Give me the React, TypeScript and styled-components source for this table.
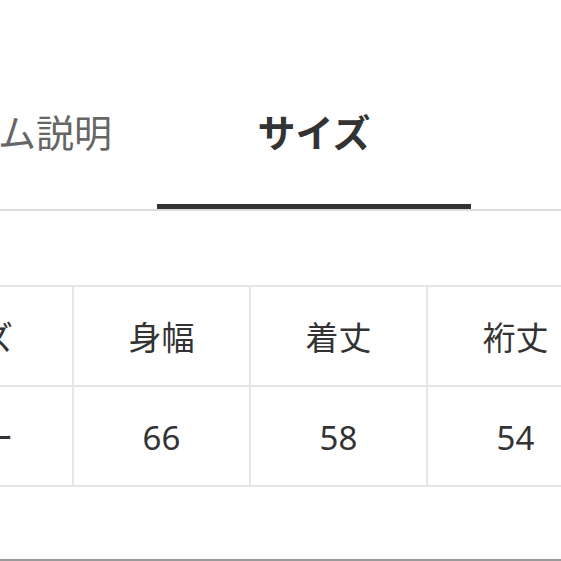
import styled, { createGlobalStyle } from 'styled-components'

const GlobalStyle = createGlobalStyle`
  html, body {
    margin: 0;
    padding: 0;
    background: #fff;
  }
  body {
    font-family: "Noto Sans CJK JP", "Noto Sans", sans-serif;
  }
`

const Page = styled.div`
  width: 561px;
  height: 561px;
  overflow: hidden;
  display: flex;
  flex-direction: column;
  background: #fff;
`

const TabsWrap = styled.div`
  padding-top: 104px;
  border-bottom: 2px solid #dcdcdc;
`

const TabRow = styled.div`
  display: flex;
  margin-left: -157px;
`

const Tab = styled.div<{ $active?: boolean }>`
  flex: 0 0 314px;
  text-align: center;
  font-size: 38px;
  line-height: 54px;
  padding-bottom: 46px;
  white-space: nowrap;
  color: ${(p) => (p.$active ? '#333' : '#666')};
  font-weight: ${(p) => (p.$active ? 700 : 400)};
  border-bottom: 5px solid ${(p) => (p.$active ? '#333' : 'transparent')};
`

const Table = styled.table`
  margin-top: 74px;
  margin-left: -146px;
  border-collapse: collapse;
  table-layout: fixed;
  width: 916px;
  flex-shrink: 0;
`

const Cell = styled.td<{ $first?: boolean }>`
  width: ${(p) => (p.$first ? '216px' : '175px')};
  height: 98px;
  border: 2px solid #e6e6e6;
  text-align: center;
  vertical-align: middle;
  font-size: 33px;
  color: #333;
  white-space: nowrap;
  padding: 0;
`

const Num = styled.span`
  font-family: "Noto Sans", sans-serif;
  font-size: 33px;
`

const Footer = styled.div`
  margin-top: auto;
  border-bottom: 2px solid #9a9a9a;
`

const headers = ['サイズ', '身幅', '着丈', '裄丈', '袖口']
const values = ['フリー', '66', '58', '54', '20']

export default function App() {
  return (
    <>
      <GlobalStyle />
      <Page>
        <TabsWrap>
          <TabRow>
            <Tab>アイテム説明</Tab>
            <Tab $active>サイズ</Tab>
          </TabRow>
        </TabsWrap>
        <Table>
          <tbody>
            <tr>
              {headers.map((h, i) => (
                <Cell key={h} $first={i === 0}>
                  {h}
                </Cell>
              ))}
            </tr>
            <tr>
              {values.map((v, i) => (
                <Cell key={i} $first={i === 0}>
                  {i === 0 ? v : <Num>{v}</Num>}
                </Cell>
              ))}
            </tr>
          </tbody>
        </Table>
        <Footer />
      </Page>
    </>
  )
}
